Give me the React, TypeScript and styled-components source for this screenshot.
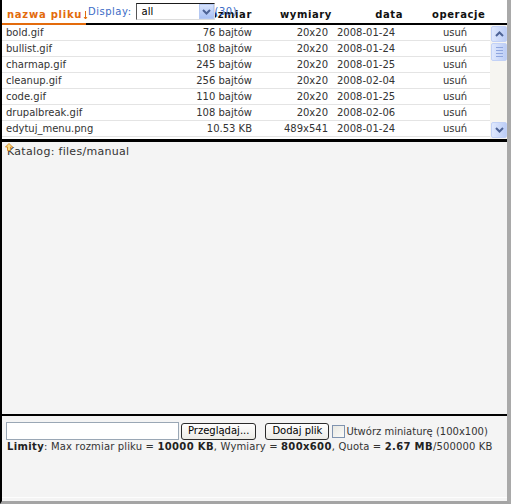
import React from "react";
import styled, { createGlobalStyle } from "styled-components";

const GlobalStyle = createGlobalStyle`
  html, body { margin: 0; padding: 0; background: #ffffff; }
  body { font-family: "DejaVu Sans", Verdana, sans-serif; }
  * { box-sizing: border-box; }
`;

const ORANGE = "#e36b0c";
const BLUE = "#3b6bc6";
const COLS = "188px 65px 77px 88px 1fr";

const Frame = styled.div`
  width: 511px;
  height: 504px;
  display: flex;
  flex-direction: column;
  background: #f4f4f4;
  border-left: 2px solid #000;
  border-right: 4px solid #a9a9a9;
  border-bottom: 3px solid #a4a4a4;
  font-size: 10px;
  color: #333;
`;

const ListPanel = styled.div`
  position: relative;
  background: #fff;
  border-bottom: 3px solid #000;
`;

const HeaderRow = styled.div`
  display: grid;
  grid-template-columns: ${COLS};
  height: 25px;
`;

const HeadCell = styled.div<{ $align: "left" | "right"; $pl?: number; $pr?: number; $sorted?: boolean }>`
  display: flex;
  align-items: flex-end;
  justify-content: ${(p) => (p.$align === "left" ? "flex-start" : "flex-end")};
  padding: 0 ${(p) => p.$pr ?? 0}px 5px ${(p) => p.$pl ?? 0}px;
  font-weight: bold;
  font-size: 10px;
  letter-spacing: ${(p) => (p.$sorted ? 0.75 : 0.6)}px;
  color: ${(p) => (p.$sorted ? ORANGE : "#111")};
  white-space: nowrap;
  background: ${(p) =>
    p.$sorted
      ? `linear-gradient(to right, ${ORANGE} 0 84px, #000 84px) bottom / 100% 2px no-repeat`
      : `linear-gradient(#000, #000) bottom / 100% 2px no-repeat`};
`;

const SortArrow = styled.svg`
  margin-left: 1px;
`;

const Body = styled.div`
  display: flex;
  height: 114px;
`;

const Rows = styled.div`
  flex: 1;
  overflow: hidden;
`;

const Row = styled.div`
  display: grid;
  grid-template-columns: ${COLS};
  height: 16px;
  border-bottom: 1px solid #e4e4e4;
  align-items: center;
  white-space: nowrap;
`;

const Cell = styled.div<{ $align: "left" | "right" | "center"; $pl?: number; $pr?: number }>`
  text-align: ${(p) => p.$align};
  padding: 0 ${(p) => p.$pr ?? 0}px 0 ${(p) => p.$pl ?? 0}px;
  line-height: 15px;
  overflow: hidden;
`;

const ScrollBar = styled.div`
  width: 17px;
  display: flex;
  flex-direction: column;
  background: #f6f5f1;
  padding: 1px 0;
`;

const ScrollButton = styled.div`
  width: 16px;
  height: 16px;
  margin-left: 1px;
  border: 1px solid #c2d1f6;
  border-radius: 2px;
  background: linear-gradient(to right, #dfe8fd, #bccdf6);
  display: flex;
  align-items: center;
  justify-content: center;
`;

const Thumb = styled(ScrollButton)`
  height: 18px;
  margin-top: 1px;
  flex-direction: column;
  gap: 2px;
`;

const Grip = styled.span`
  width: 7px;
  height: 1px;
  background: #8fa6df;
`;

const Track = styled.div`
  flex: 1;
`;

const DisplayBox = styled.div`
  position: absolute;
  left: 86px;
  top: 3px;
  display: flex;
  align-items: center;
  gap: 4px;
  color: ${BLUE};
  font-size: 10px;
  letter-spacing: 0.5px;
  z-index: 2;
`;

const SelectBox = styled.div`
  width: 79px;
  height: 17px;
  display: flex;
  background: #fff;
  border-top: 1px solid #1a1a1a;
  border-left: 1px solid #555;
  border-right: 1px solid #dcdcdc;
  border-bottom: 1px solid #dcdcdc;
  color: #000;
  letter-spacing: 0;
`;

const SelectValue = styled.span`
  flex: 1;
  padding-left: 5px;
  line-height: 15px;
`;

const SelectArrow = styled.span`
  width: 15px;
  height: 15px;
  background: linear-gradient(#d6e2fd, #a9c1f4);
  border: 1px solid #b4c8f3;
  display: flex;
  align-items: center;
  justify-content: center;
`;

const Count = styled.span`
  margin-left: -4px;
  letter-spacing: 0.5px;
`;

const DirLine = styled.div`
  position: relative;
  padding: 3px 0 0 5px;
  font-size: 11px;
  line-height: 14px;
  letter-spacing: 0.3px;
  color: #333;
`;

const UpIcon = styled.svg`
  position: absolute;
  left: 3px;
  top: 1px;
`;

const Spacer = styled.div`
  flex: 1;
`;

const UploadSection = styled.div`
  border-top: 2px solid #000;
  padding: 6px 0 0 4px;
`;

const UploadRow = styled.div`
  display: flex;
  align-items: center;
  height: 18px;
`;

const FileInput = styled.input`
  width: 173px;
  height: 18px;
  border: 1px solid #9aa7b5;
  background: #fff;
  margin: 0 2px 0 0;
  padding: 0;
`;

const Button = styled.button<{ $ml?: number }>`
  height: 17px;
  margin: 0 0 0 ${(p) => p.$ml ?? 0}px;
  padding: 0 6px;
  border: 1px solid #2b2b2b;
  border-radius: 3px;
  background: linear-gradient(#fefefe, #ecebe6);
  font-family: "DejaVu Sans", Verdana, sans-serif;
  font-size: 10px;
  color: #000;
  line-height: 14px;
`;

const CheckBox = styled.span`
  width: 13px;
  height: 13px;
  margin-left: 3px;
  border: 1px solid #8094b0;
  background: linear-gradient(135deg, #e8e8e2, #fbfbf9);
`;

const CheckLabel = styled.span`
  margin-left: 1px;
  color: #333;
`;

const Limits = styled.div`
  line-height: 14px;
  padding-left: 1px;
  white-space: nowrap;
  letter-spacing: 0.15px;
  color: #333;
`;

const B = styled.b`
  color: #222;
  letter-spacing: 0.35px;
`;

const Footer = styled.div`
  height: 44px;
  border-bottom: 1px solid #fdfdfd;
  margin-bottom: 3px;
`;

const files = [
  ["bold.gif", "76 bajtów", "20x20", "2008-01-24"],
  ["bullist.gif", "108 bajtów", "20x20", "2008-01-24"],
  ["charmap.gif", "245 bajtów", "20x20", "2008-01-25"],
  ["cleanup.gif", "256 bajtów", "20x20", "2008-02-04"],
  ["code.gif", "110 bajtów", "20x20", "2008-01-25"],
  ["drupalbreak.gif", "108 bajtów", "20x20", "2008-02-06"],
  ["edytuj_menu.png", "10.53 KB", "489x541", "2008-01-24"],
  ["", "", "", ""],
];

const Chevron = ({ dir }: { dir: "up" | "down" }) => (
  <svg width="9" height="6" viewBox="0 0 9 6">
    <polyline
      points={dir === "up" ? "1,5 4.5,1.5 8,5" : "1,1 4.5,4.5 8,1"}
      fill="none"
      stroke="#4d6396"
      strokeWidth="2"
    />
  </svg>
);

export default function App() {
  return (
    <>
      <GlobalStyle />
      <Frame>
        <ListPanel>
          <HeaderRow>
            <HeadCell $align="left" $pl={5} $sorted>
              nazwa pliku
              <SortArrow width="5" height="9" viewBox="0 0 5 9">
                <line x1="2.5" y1="0" x2="2.5" y2="8" stroke={ORANGE} strokeWidth="1" />
                <polyline points="1,6 2.5,8 4,6" fill="none" stroke={ORANGE} strokeWidth="1" />
              </SortArrow>
            </HeadCell>
            <HeadCell $align="right" $pr={3}>rozmiar</HeadCell>
            <HeadCell $align="right" $pr={0}>wymiary</HeadCell>
            <HeadCell $align="right" $pr={17}>data</HeadCell>
            <HeadCell $align="left" $pl={12}>operacje</HeadCell>
          </HeaderRow>
          <Body>
            <Rows>
              {files.map(([name, size, dim, date], i) => (
                <Row key={i}>
                  <Cell $align="left" $pl={4}>{name}</Cell>
                  <Cell $align="right" $pr={3}>{size}</Cell>
                  <Cell $align="right" $pr={4}>{dim}</Cell>
                  <Cell $align="left" $pl={5}>{date}</Cell>
                  <Cell $align="center">{name ? "usuń" : ""}</Cell>
                </Row>
              ))}
            </Rows>
            <ScrollBar>
              <ScrollButton>
                <Chevron dir="up" />
              </ScrollButton>
              <Thumb>
                <Grip />
                <Grip />
                <Grip />
                <Grip />
              </Thumb>
              <Track />
              <ScrollButton>
                <Chevron dir="down" />
              </ScrollButton>
            </ScrollBar>
          </Body>
          <DisplayBox>
            Display:
            <SelectBox>
              <SelectValue>all</SelectValue>
              <SelectArrow>
                <Chevron dir="down" />
              </SelectArrow>
            </SelectBox>
            <Count>(30)</Count>
          </DisplayBox>
        </ListPanel>
        <DirLine>
          <UpIcon width="8" height="8" viewBox="0 0 8 8">
            <polygon points="4,0.5 7.5,4 5.5,4 5.5,7.5 2.5,7.5 2.5,4 0.5,4" fill="#fbe08a" stroke="#d9902a" strokeWidth="1" />
          </UpIcon>
          Katalog: files/manual
        </DirLine>
        <Spacer />
        <UploadSection>
          <UploadRow>
            <FileInput type="text" />
            <Button>Przeglądaj...</Button>
            <Button $ml={9}>Dodaj plik</Button>
            <CheckBox />
            <CheckLabel>Utwórz miniaturę (100x100)</CheckLabel>
          </UploadRow>
          <Limits>
            <B>Limity</B>: Max rozmiar pliku = <B>10000 KB</B>, Wymiary = <B>800x600</B>, Quota ={" "}
            <B>2.67 MB</B>/500000 KB
          </Limits>
        </UploadSection>
        <Footer />
      </Frame>
    </>
  );
}
